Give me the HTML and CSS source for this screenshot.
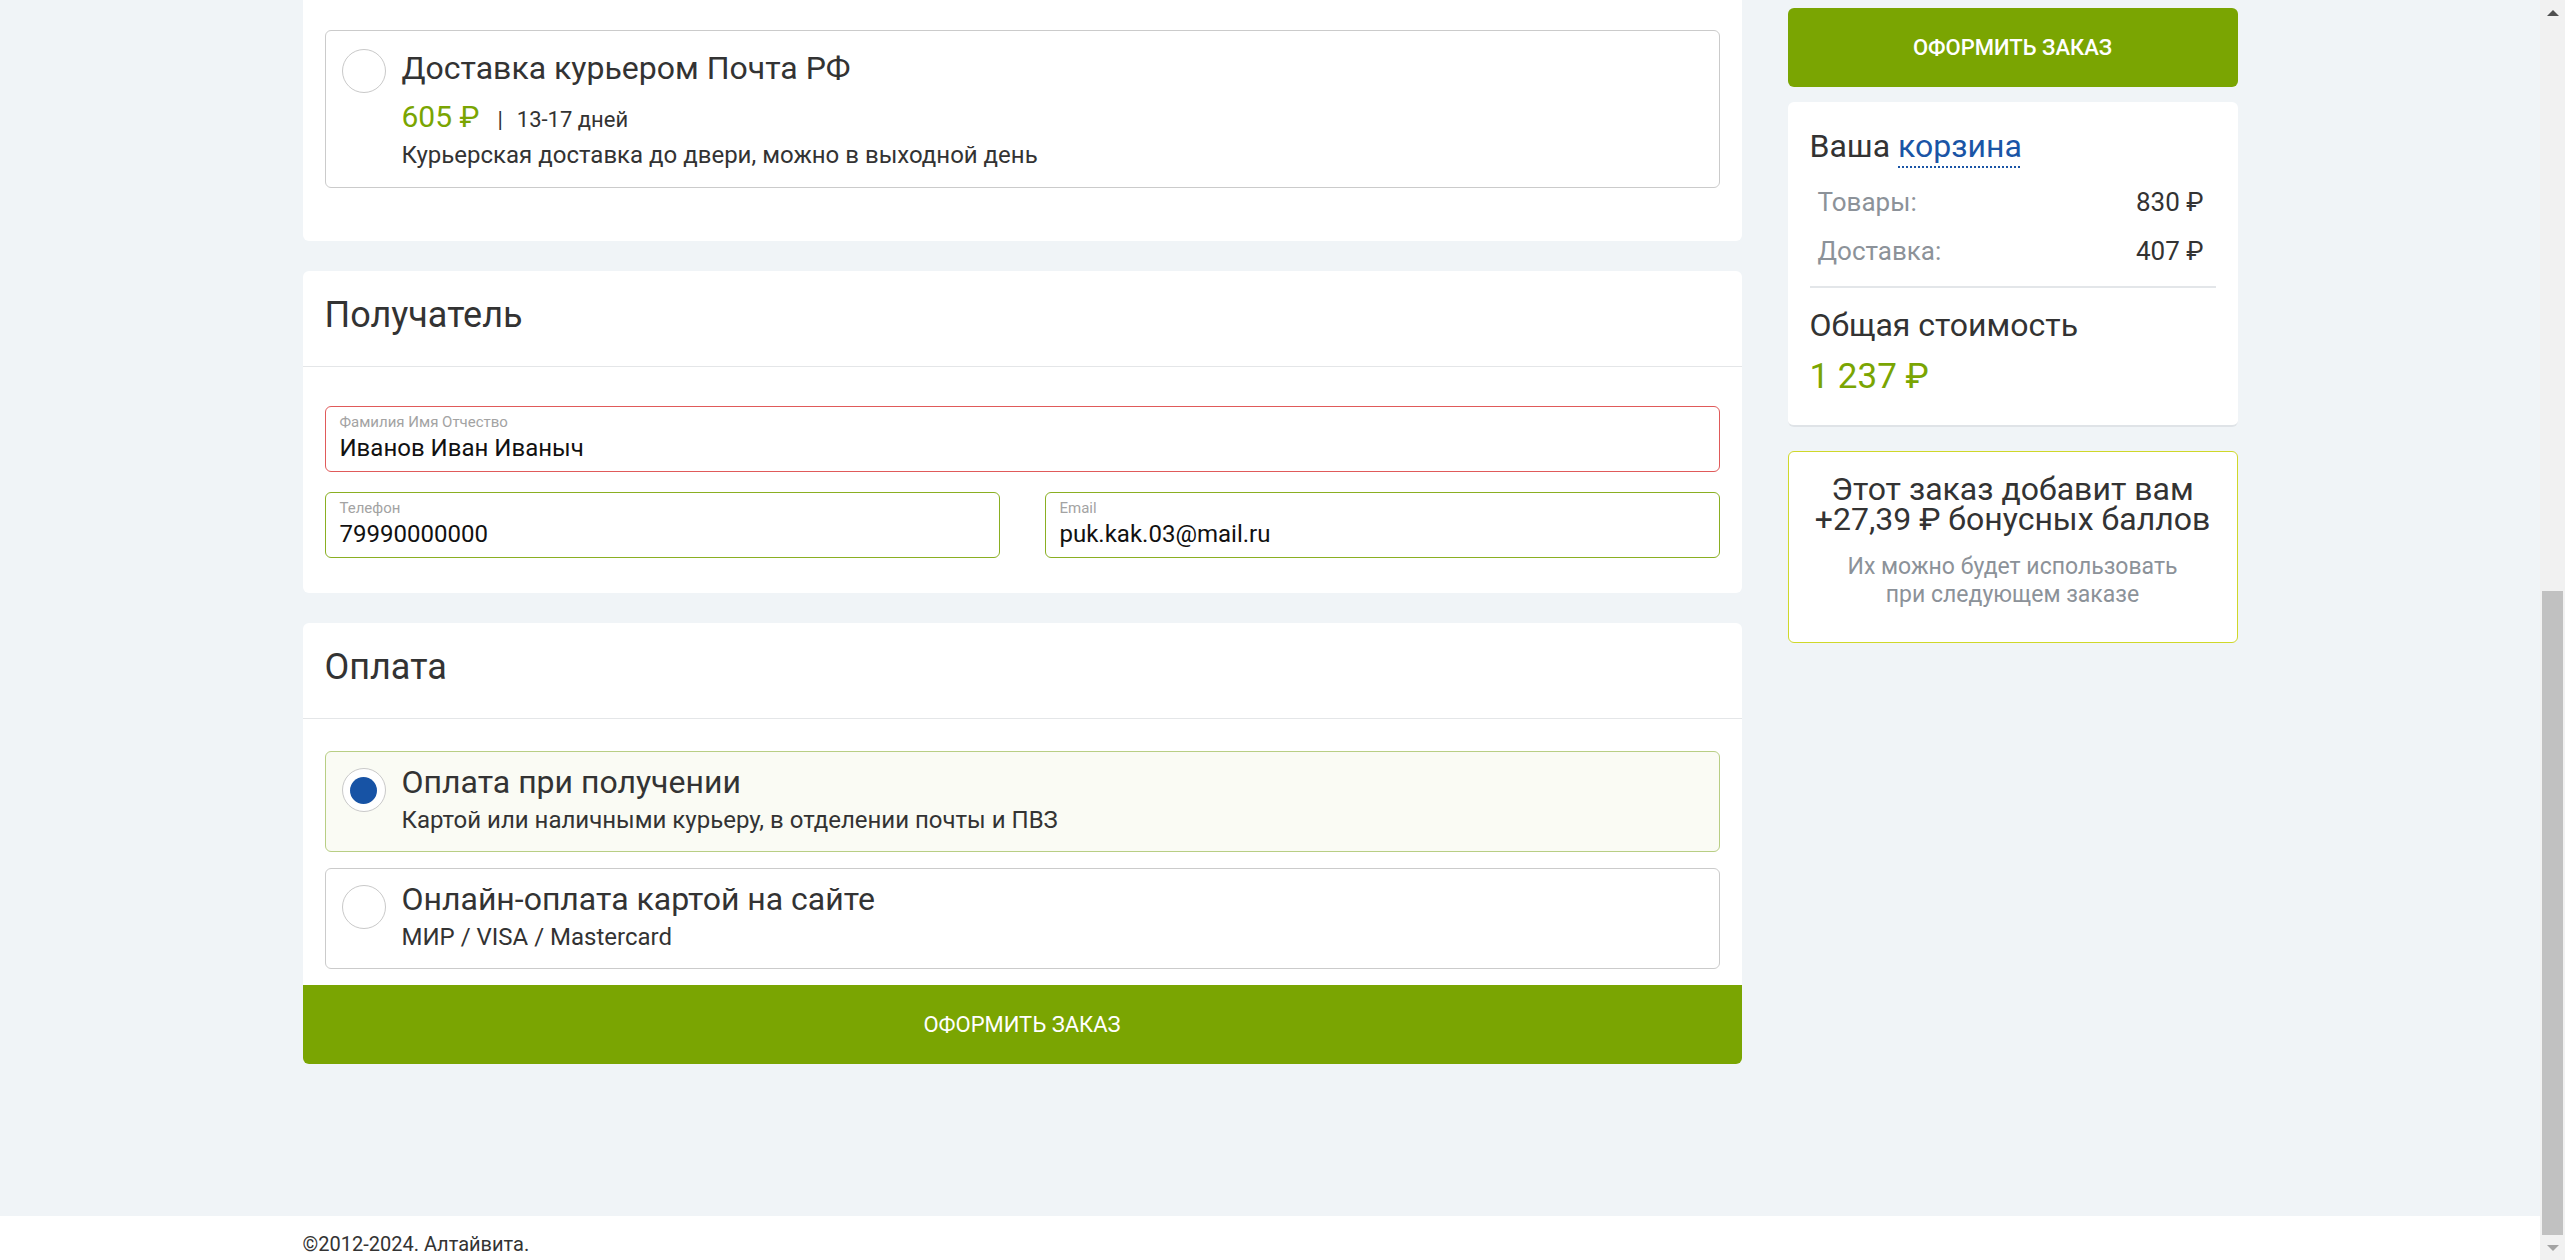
FILE: index.html
```html
<!DOCTYPE html>
<html lang="ru">
<head>
<meta charset="utf-8">
<title>Оформление заказа</title>
<link rel="stylesheet" href="styles.css">
</head>
<body>
<div class="viewport">
  <div class="page">
    <main class="main">
      <div class="container">
        <div class="col-left">
          <section class="card card-cut">
            <div class="option option-delivery">
              <span class="radio"></span>
              <div class="option-text">
                <div class="option-title">Доставка курьером Почта РФ</div>
                <div class="option-meta"><span class="price">605 ₽</span><span class="sep">|</span><span class="days">13-17 дней</span></div>
                <div class="option-desc">Курьерская доставка до двери, можно в выходной день</div>
              </div>
            </div>
          </section>

          <section class="card">
            <h2 class="card-header">Получатель</h2>
            <div class="card-body recipient">
              <div class="field field-error">
                <span class="field-label">Фамилия Имя Отчество</span>
                <span class="field-value">Иванов Иван Иваныч</span>
              </div>
              <div class="field-row">
                <div class="field field-ok">
                  <span class="field-label">Телефон</span>
                  <span class="field-value">79990000000</span>
                </div>
                <div class="field field-ok">
                  <span class="field-label">Email</span>
                  <span class="field-value">puk.kak.03@mail.ru</span>
                </div>
              </div>
            </div>
          </section>

          <section class="card">
            <h2 class="card-header">Оплата</h2>
            <div class="card-body payment">
              <div class="option selected">
                <span class="radio checked"></span>
                <div class="option-text">
                  <div class="option-title">Оплата при получении</div>
                  <div class="option-sub">Картой или наличными курьеру, в отделении почты и ПВЗ</div>
                </div>
              </div>
              <div class="option">
                <span class="radio"></span>
                <div class="option-text">
                  <div class="option-title">Онлайн-оплата картой на сайте</div>
                  <div class="option-sub">МИР / VISA / Mastercard</div>
                </div>
              </div>
            </div>
            <button class="btn btn-bottom" type="button">Оформить заказ</button>
          </section>
        </div>

        <aside class="col-right">
          <button class="btn btn-top" type="button">Оформить заказ</button>
          <div class="cart">
            <div class="cart-title">Ваша <span class="cart-link">корзина</span></div>
            <div class="cart-rows">
              <div class="cart-row"><span class="cart-label">Товары:</span><span class="cart-val">830 ₽</span></div>
              <div class="cart-row"><span class="cart-label">Доставка:</span><span class="cart-val">407 ₽</span></div>
            </div>
            <div class="cart-divider"></div>
            <div class="total-label">Общая стоимость</div>
            <div class="total-value">1 237 ₽</div>
          </div>
          <div class="bonus">
            <div class="bonus-title">Этот заказ добавит вам<br>+27,39 ₽ бонусных баллов</div>
            <div class="bonus-note">Их можно будет использовать<br>при следующем заказе</div>
          </div>
        </aside>
      </div>
    </main>
    <footer class="footer">
      <div class="footer-inner">©2012-2024. Алтайвита.</div>
    </footer>
  </div>
  <div class="scrollbar">
    <div class="sb-btn"><span class="sb-arrow-up"></span></div>
    <div class="sb-track"><div class="sb-thumb"></div></div>
    <div class="sb-btn"><span class="sb-arrow-down"></span></div>
  </div>
</div>
</body>
</html>
```
FILE: styles.css
```css
* { box-sizing: border-box; }
html, body { margin: 0; padding: 0; }
body {
  font-family: Roboto, "Noto Sans", "DejaVu Sans", sans-serif;
  color: #333;
  background: #f0f4f7;
  overflow: hidden;
}
.viewport { display: flex; height: 1260px; }
.page { flex: 1; display: flex; flex-direction: column; background: #f0f4f7; }
.main { flex: 1; padding-bottom: 150px; }
.container {
  width: 1935px;
  margin: 0 auto;
  display: grid;
  grid-template-columns: 1439px 450px;
  column-gap: 46px;
  align-items: start;
}

/* left column */
.col-left { display: flex; flex-direction: column; gap: 30px; }
.card { background: #fff; border-radius: 6px; }
.card-cut { border-radius: 0 0 6px 6px; padding: 30px 22px 53px; }
.card-header {
  margin: 0;
  font-size: 36px;
  font-weight: 400;
  line-height: 44px;
  padding: 22px 22px 29px;
  border-bottom: 1px solid #e4e6e8;
}
.card-body { padding: 0 22px; }

.recipient { padding-top: 39px; padding-bottom: 35px; display: flex; flex-direction: column; gap: 20px; }
.field {
  height: 66px;
  border: 1px solid #ccc;
  border-radius: 6px;
  padding: 6px 14px 8px;
  display: flex;
  flex-direction: column;
}
.field-error { border-color: #e05a5a; }
.field-ok { border-color: #8aaf22; }
.field-label { font-size: 15px; line-height: 18px; color: #a3a3a3; }
.field-value { margin-top: 2px; font-size: 24px; line-height: 30px; color: #111; }
.field-row { display: grid; grid-template-columns: 1fr 1fr; column-gap: 45px; }

.payment { padding-top: 32px; padding-bottom: 16px; display: flex; flex-direction: column; gap: 16px; }
.option {
  display: flex;
  align-items: flex-start;
  gap: 16px;
  border: 1px solid #cbcbcb;
  border-radius: 6px;
  padding: 11px 16px 16px;
  background: #fff;
}
.option.selected { background: #fafbf4; border-color: #b8ce84; }
.option-delivery { height: 158px; padding: 18px 16px 0; }
.radio {
  flex: none;
  width: 44px;
  height: 44px;
  margin-top: 5px;
  border: 1px solid #c9c9c9;
  border-radius: 50%;
  background: #fff;
  display: flex;
  align-items: center;
  justify-content: center;
}
.option-delivery .radio { margin-top: 0; }
.radio.checked::after {
  content: "";
  width: 27px;
  height: 27px;
  border-radius: 50%;
  background: #1753a5;
}
.option-text { display: flex; flex-direction: column; }
.option-title { font-size: 32px; line-height: 38px; }
.option-sub { margin-top: 4px; font-size: 24px; line-height: 30px; }
.option-meta { margin-top: 10px; height: 40px; line-height: 40px; display: flex; align-items: baseline; overflow: hidden; }
.price { font-size: 30px; color: #7aa502; }
.sep { font-size: 22px; margin: 0 14px 0 18px; }
.days { font-size: 22px; }
.option-desc { margin-top: 3px; font-size: 24px; line-height: 30px; }

.btn {
  display: flex;
  align-items: center;
  justify-content: center;
  width: 100%;
  height: 79px;
  border: 0;
  padding: 0;
  background: #7aa502;
  color: #fff;
  font-family: inherit;
  font-size: 22px;
  text-transform: uppercase;
}
.btn-bottom { border-radius: 0 0 6px 6px; }
.btn-top { border-radius: 6px; font-weight: 500; }

/* right column */
.col-right { padding-top: 8px; display: flex; flex-direction: column; }
.cart {
  margin-top: 15px;
  background: #fff;
  border-radius: 6px;
  border-bottom: 2px solid #dfe3e7;
  padding: 25px 22px 26px;
}
.cart-title { font-size: 32px; line-height: 38px; }
.cart-link {
  color: #1a55a6;
  text-decoration: underline dotted #1a55a6;
  text-decoration-thickness: 1.5px;
  text-underline-offset: 9px;
}
.cart-rows { margin-top: 17px; display: flex; flex-direction: column; gap: 9px; padding: 0 12px 0 8px; }
.cart-row { display: flex; justify-content: space-between; font-size: 26px; line-height: 40px; }
.cart-label { color: #8c9299; }
.cart-divider { margin-top: 15px; height: 2px; background: #e3e6e9; }
.total-label { margin-top: 17px; font-size: 32px; line-height: 40px; }
.total-value { margin-top: 10px; font-size: 35px; line-height: 44px; color: #7aa502; }

.bonus {
  margin-top: 24px;
  background: #fff;
  border: 1px solid #cfd82a;
  border-radius: 6px;
  padding: 22px 16px 33px;
  text-align: center;
}
.bonus-title { font-size: 32px; line-height: 30px; }
.bonus-note { margin-top: 19px; font-size: 23px; line-height: 28px; color: #8c9299; }

/* footer */
.footer { background: #fff; height: 44px; padding-top: 16px; }
.footer-inner { width: 1935px; margin: 0 auto; font-size: 20px; line-height: 24px; color: #333; }

/* fake scrollbar */
.scrollbar { width: 25px; flex: none; background: #f1f1f1; display: flex; flex-direction: column; }
.sb-btn { height: 25px; display: flex; align-items: center; justify-content: center; }
.sb-arrow-up { width: 0; height: 0; border-left: 6px solid transparent; border-right: 6px solid transparent; border-bottom: 6px solid #505050; }
.sb-arrow-down { width: 0; height: 0; border-left: 6px solid transparent; border-right: 6px solid transparent; border-top: 6px solid #a3a3a3; }
.sb-track { flex: 1; display: flex; flex-direction: column; justify-content: flex-end; padding: 0 2px; }
.sb-thumb { height: 644px; background: #c1c1c1; }
```
